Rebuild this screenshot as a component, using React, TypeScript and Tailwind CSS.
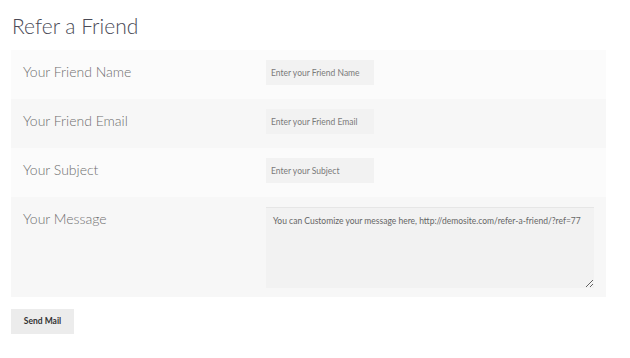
import React from 'react';

// Rows of the refer form (label + placeholder)
const fields = [
    { label: 'Your Friend Name', placeholder: 'Enter your Friend Name', bg: 'bg-[#fbfbfb]' },
    { label: 'Your Friend Email', placeholder: 'Enter your Friend Email', bg: 'bg-[#f7f7f7]' },
    { label: 'Your Subject', placeholder: 'Enter your Subject', bg: 'bg-[#fbfbfb]' },
];

const App = () => {
    return (
        <div className="min-h-[358px] w-[630px] bg-white px-[11px] pt-[12px] font-['Lato',sans-serif]">
            <h1 className="pl-[1px] text-[21px] leading-[27px] font-light text-[#4a4a56]">
                Refer a Friend
            </h1>

            <div className="mt-[11px] w-[595px]">
                {fields.map((f) => (
                    <div key={f.label} className={`grid grid-cols-[255px_1fr] items-start h-[49px] pt-[10px] ${f.bg}`}>
                        <span className="pl-3 pt-[3px] text-[14px] leading-[18px] font-light text-[#6f6f6f]">
                            {f.label}
                        </span>
                        <input
                            type="text"
                            placeholder={f.placeholder}
                            className="h-[25px] w-[108px] bg-[#f2f2f2] px-[5px] text-[8.5px] text-[#777] placeholder:text-[#7a7a7a] outline-none"
                        />
                    </div>
                ))}

                {/* Message row */}
                <div className="grid grid-cols-[255px_1fr] items-start h-[100px] pt-[10px] bg-[#f7f7f7]">
                    <span className="pl-3 pt-[3px] text-[14px] leading-[18px] font-light text-[#6f6f6f]">
                        Your Message
                    </span>
                    <textarea
                        defaultValue="You can Customize your message here, http://demosite.com/refer-a-friend/?ref=77"
                        className="h-[81px] w-[328px] bg-[#f2f2f2] border-t border-[#e6e6e6] px-[7px] pt-[7px] text-[8.5px] leading-[12px] text-[#666] outline-none"
                    />
                </div>
            </div>

            <button className="mt-3 h-[25px] w-[63px] bg-[#ececec] text-[8.5px] font-bold text-[#333]">
                Send Mail
            </button>
        </div>
    );
};

export default App;
